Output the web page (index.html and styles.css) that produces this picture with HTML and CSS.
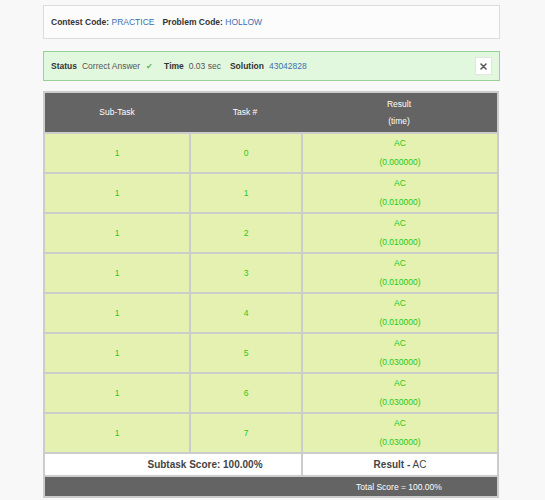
FILE: index.html
```html
<!DOCTYPE html>
<html>
<head>
<meta charset="utf-8">
<link rel="stylesheet" href="styles.css">
</head>
<body>
<div class="wrap">
  <div class="info-box">
    <div class="line"><span class="lbl">Contest Code:</span> <a class="val">PRACTICE</a><span class="lbl gap">Problem Code:</span> <a class="val">HOLLOW</a></div>
  </div>
  <div class="status-box">
    <div class="line"><span class="lbl sl">Status</span><span class="txt">Correct Answer</span><span class="check">✔</span><span class="lbl sl g1">Time</span><span class="txt">0.03 sec</span><span class="lbl sl g2">Solution</span><a class="val">43042828</a></div>
    <button class="close" type="button"><svg width="7" height="7" viewBox="0 0 7 7"><path d="M1 1L6 6M6 1L1 6" stroke="#555" stroke-width="1.5" stroke-linecap="round"/></svg></button>
  </div>
  <table class="results">
    <colgroup><col class="c1"><col class="c2"><col class="c3"></colgroup>
    <thead>
      <tr><th>Sub-Task</th><th>Task #</th><th>Result<br>(time)</th></tr>
    </thead>
    <tbody>
      <tr class="row"><td>1</td><td>0</td><td>AC<br>(0.000000)</td></tr>
      <tr class="row"><td>1</td><td>1</td><td>AC<br>(0.010000)</td></tr>
      <tr class="row"><td>1</td><td>2</td><td>AC<br>(0.010000)</td></tr>
      <tr class="row"><td>1</td><td>3</td><td>AC<br>(0.010000)</td></tr>
      <tr class="row"><td>1</td><td>4</td><td>AC<br>(0.010000)</td></tr>
      <tr class="row"><td>1</td><td>5</td><td>AC<br>(0.030000)</td></tr>
      <tr class="row"><td>1</td><td>6</td><td>AC<br>(0.030000)</td></tr>
      <tr class="row"><td>1</td><td>7</td><td>AC<br>(0.030000)</td></tr>
      <tr class="score"><td colspan="2" class="sub-score">Subtask Score: 100.00%</td><td><b>Result -</b> AC</td></tr>
      <tr class="total"><td colspan="2"></td><td>Total Score = 100.00%</td></tr>
    </tbody>
  </table>
</div>
</body>
</html>
```
FILE: styles.css
```css
html, body {
  margin: 0;
  padding: 0;
  background: #f8f8f8;
  font-family: "Liberation Sans", Arial, sans-serif;
  font-size: 8.5px;
  color: #555;
}
.wrap {
  width: 457px;
  margin-left: 43px;
  padding-top: 5px;
}
.line { white-space: nowrap; }
.info-box {
  box-sizing: border-box;
  height: 34px;
  background: #fcfcfc;
  border: 1px solid #dcdcdc;
  padding: 0 7px;
  display: flex;
  align-items: center;
}
.lbl {
  font-weight: bold;
  color: #333;
}
.gap { margin-left: 8px; }
.sl { margin-right: 5px; }
.g1 { margin-left: 11px; }
.g2 { margin-left: 9px; }
.val { color: #3d6fb0; }
.txt { color: #555; }
.check { color: #5cb85c; font-size: 8px; margin-left: 6px; }
.status-box {
  box-sizing: border-box;
  margin-top: 12px;
  height: 30px;
  background: #e2f8de;
  border: 1px solid #99d099;
  padding: 0 7px;
  display: flex;
  align-items: center;
  justify-content: space-between;
}
.close {
  width: 17px;
  height: 18px;
  padding: 0;
  background: #fff;
  border: 1px solid #e4e4e4;
  display: flex;
  align-items: center;
  justify-content: center;
}
.results {
  margin-top: 10px;
  width: 456px;
  border: 2px solid #cccccc;
  border-spacing: 0;
  table-layout: fixed;
}
.c1 { width: 144px; }
.c2 { width: 112px; }
.c3 { width: 196px; }
.results th {
  background: #646464;
  color: #fff;
  font-weight: normal;
  height: 39px;
  line-height: 17px;
  padding: 0;
  text-align: center;
}
.results td {
  padding: 0;
  text-align: center;
}
.row td {
  background: #e4f1b0;
  color: #22cc22;
  height: 38px;
  line-height: 19px;
  border-top: 2px solid #cccccc;
}
.row td + td { border-left: 2px solid #cccccc; }
.score td {
  background: #fff;
  color: #444;
  font-size: 10px;
  height: 21px;
  border-top: 2px solid #cccccc;
}
.score td + td { border-left: 2px solid #cccccc; }
.score .sub-score {
  font-weight: bold;
  padding-left: 64px;
}
.total td {
  background: #646464;
  color: #fff;
  height: 19px;
  border-top: 2px solid #cccccc;
}
```
